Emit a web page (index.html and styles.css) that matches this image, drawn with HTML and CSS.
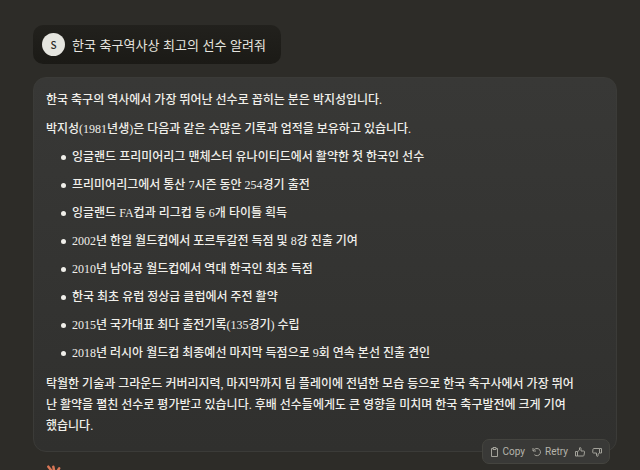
FILE: index.html
```html
<!DOCTYPE html>
<html lang="ko">
<head>
    <meta charset="UTF-8">
    <meta name="viewport" content="width=device-width, initial-scale=1.0">
    <title>한국 축구역사상 최고의 선수</title>
    <link rel="stylesheet" href="styles.css">
</head>
<body>
    <main class="chat">
        <div class="question">
            <span class="avatar">S</span>
            <p>한국 축구역사상 최고의 선수 알려줘</p>
        </div>
        <article class="answer">
            <p>한국 축구의 역사에서 가장 뛰어난 선수로 꼽히는 분은 박지성입니다.</p>
            <p>박지성(1981년생)은 다음과 같은 수많은 기록과 업적을 보유하고 있습니다.</p>
            <ul>
                <li>잉글랜드 프리미어리그 맨체스터 유나이티드에서 활약한 첫 한국인 선수</li>
                <li>프리미어리그에서 통산 7시즌 동안 254경기 출전</li>
                <li>잉글랜드 FA컵과 리그컵 등 6개 타이틀 획득</li>
                <li>2002년 한일 월드컵에서 포르투갈전 득점 및 8강 진출 기여</li>
                <li>2010년 남아공 월드컵에서 역대 한국인 최초 득점</li>
                <li>한국 최초 유럽 정상급 클럽에서 주전 활약</li>
                <li>2015년 국가대표 최다 출전기록(135경기) 수립</li>
                <li>2018년 러시아 월드컵 최종예선 마지막 득점으로 9회 연속 본선 진출 견인</li>
            </ul>
            <p>탁월한 기술과 그라운드 커버리지력, 마지막까지 팀 플레이에 전념한 모습 등으로 한국 축구사에서 가장 뛰어난 활약을 펼친 선수로 평가받고 있습니다. 후배 선수들에게도 큰 영향을 미치며 한국 축구발전에 크게 기여했습니다.</p>
            <div class="actions">
                <button type="button">
                    <svg viewBox="0 0 10 10"><path d="M3.5 1.5h-2v8h6v-8H6M3 .5h3v2H3z"/></svg>
                    Copy
                </button>
                <button type="button">
                    <svg viewBox="0 0 10 10"><path d="M1 1v3h3M1.2 3.8C2 2.3 3.4 1.5 5 1.5a3.6 3.6 0 1 1-2.6 6.2"/></svg>
                    Retry
                </button>
                <button type="button" aria-label="Good response">
                    <svg viewBox="0 0 10 10"><path d="M.5 4.5h2V9h-2zM2.5 4.8 4.500 3V1c0-.7 1.500-.7 1.500.5V4h2.700c.6 0 .9.4.8 1L9 8.300c-.1.5-.4.7-.8.7H2.500"/></svg>
                </button>
                <button type="button" aria-label="Bad response">
                    <svg viewBox="0 0 10 10"><path d="M7.5 1.5h2V6h-2zM7.5 6 6 7.2V9c0 .6-1.500.6-1.500-.5V6h-3c-.6 0-.9-.4-.8-1L1 2.200c.1-.5.4-.7.8-.7h5.700"/></svg>
                </button>
            </div>
        </article>
        <svg class="logo" viewBox="0 0 24 24"><path d="M12 12 4 2M12 12 10 2M12 12 17 4M12 12 23 9M12 12 23 14M12 12 19 21M12 12 12 23M12 12 5 21M12 12 1 16M12 12 1 9"/></svg>
    </main>
</body>
</html>
```

FILE: styles.css
```css
* {
    box-sizing: border-box;
}
body {
    height: 100vh;
    margin: 0;
    overflow: hidden;
    background: #2d2c28;
    color: #f0efea;
    font-family: "Liberation Serif", "Noto Sans CJK KR", serif;
    font-size: 12px;
    font-weight: 500;
    line-height: 21px;
}
p, ul {
    margin: 0;
}
.chat {
    padding: 25px 23px 0 33px;
}
.question {
    display: flex;
    align-items: center;
    gap: 7px;
    width: fit-content;
    height: 39px;
    padding: 0 15px 0 9px;
    border-radius: 10px;
    background: linear-gradient(#22211d, #1b1a16);
    color: #e5e4df;
    font-family: "Noto Sans CJK KR", sans-serif;
    font-size: 13px;
    font-weight: 400;
}
.avatar {
    display: flex;
    align-items: center;
    justify-content: center;
    width: 23px;
    height: 23px;
    border-radius: 50%;
    background: #e5e5df;
    color: #2d2c28;
    font-size: 10px;
    font-weight: 500;
}
.answer {
    position: relative;
    margin-top: 13px;
    padding: 12px 40px 14px 12px;
    border: 1px solid #3b3b38;
    border-radius: 13px;
    background: linear-gradient(#383836, #30302e);
}
.answer p + p {
    margin-top: 8px;
}
.answer ul {
    display: flex;
    flex-direction: column;
    gap: 7px;
    margin: 7px 0 10px;
    padding-left: 15px;
    list-style: none;
}
.answer li {
    display: flex;
    align-items: center;
    gap: 6px;
}
.answer li::before {
    content: "";
    flex: none;
    width: 5px;
    height: 5px;
    border-radius: 50%;
    background: #f0efea;
}
.actions {
    position: absolute;
    right: 6px;
    bottom: -13px;
    display: flex;
    align-items: center;
    gap: 7px;
    height: 25px;
    padding: 0 7px;
    border: 1px solid #44443f;
    border-radius: 7px;
    background: #393937;
}
.actions button {
    display: flex;
    align-items: center;
    gap: 3px;
    padding: 0;
    border: 0;
    background: none;
    color: #b5b4ab;
    font-family: Roboto, sans-serif;
    font-size: 10px;
    cursor: pointer;
}
.actions svg {
    width: 10px;
    height: 10px;
    fill: none;
    stroke: #a3a29a;
}
.logo {
    display: block;
    width: 20px;
    height: 20px;
    margin: 13px 0 0 12px;
    stroke: #d97757;
    stroke-width: 3;
    stroke-linecap: round;
}
```
